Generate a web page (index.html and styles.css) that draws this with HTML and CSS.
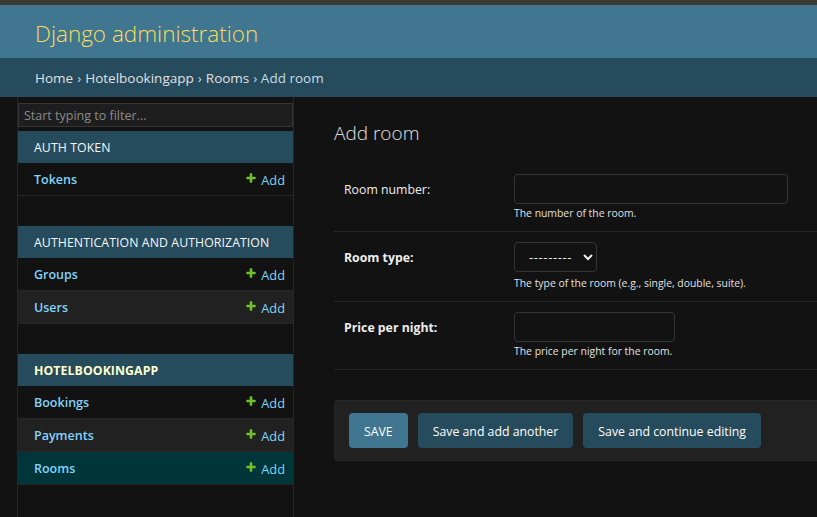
FILE: index.html
```html
<!DOCTYPE html>
<html lang="en">
<head>
<meta charset="utf-8">
<title>Add room | Django site admin</title>
<link rel="stylesheet" href="styles.css">
</head>
<body>
<div class="topbar"></div>
<header class="header">
  <div class="site-name">Django administration</div>
</header>
<nav class="breadcrumbs">
  <a href="#">Home</a> › <a href="#">Hotelbookingapp</a> › <a href="#">Rooms</a> › Add room
</nav>
<div class="main">
  <div class="toggle-nav"></div>
  <aside class="sidebar">
    <input class="nav-filter" type="search" placeholder="Start typing to filter...">
    <div class="module">
      <div class="caption">Auth Token</div>
      <div class="model-row">
        <a class="model" href="#">Tokens</a>
        <a class="addlink" href="#"><svg class="plus" viewBox="0 0 1792 1792"><path d="M1600 796v192q0 40-28 68t-68 28h-416v416q0 40-28 68t-68 28h-192q-40 0-68-28t-28-68v-416h-416q-40 0-68-28t-28-68v-192q0-40 28-68t68-28h416v-416q0-40 28-68t68-28h192q40 0 68 28t28 68v416h416q40 0 68 28t28 68z"/></svg>Add</a>
      </div>
    </div>
    <div class="module">
      <div class="caption">Authentication and Authorization</div>
      <div class="model-row">
        <a class="model" href="#">Groups</a>
        <a class="addlink" href="#"><svg class="plus" viewBox="0 0 1792 1792"><path d="M1600 796v192q0 40-28 68t-68 28h-416v416q0 40-28 68t-68 28h-192q-40 0-68-28t-28-68v-416h-416q-40 0-68-28t-28-68v-192q0-40 28-68t68-28h416v-416q0-40 28-68t68-28h192q40 0 68 28t28 68v416h416q40 0 68 28t28 68z"/></svg>Add</a>
      </div>
      <div class="model-row alt">
        <a class="model" href="#">Users</a>
        <a class="addlink" href="#"><svg class="plus" viewBox="0 0 1792 1792"><path d="M1600 796v192q0 40-28 68t-68 28h-416v416q0 40-28 68t-68 28h-192q-40 0-68-28t-28-68v-416h-416q-40 0-68-28t-28-68v-192q0-40 28-68t68-28h416v-416q0-40 28-68t68-28h192q40 0 68 28t28 68v416h416q40 0 68 28t28 68z"/></svg>Add</a>
      </div>
    </div>
    <div class="module current-app">
      <div class="caption">Hotelbookingapp</div>
      <div class="model-row">
        <a class="model" href="#">Bookings</a>
        <a class="addlink" href="#"><svg class="plus" viewBox="0 0 1792 1792"><path d="M1600 796v192q0 40-28 68t-68 28h-416v416q0 40-28 68t-68 28h-192q-40 0-68-28t-28-68v-416h-416q-40 0-68-28t-28-68v-192q0-40 28-68t68-28h416v-416q0-40 28-68t68-28h192q40 0 68 28t28 68v416h416q40 0 68 28t28 68z"/></svg>Add</a>
      </div>
      <div class="model-row alt">
        <a class="model" href="#">Payments</a>
        <a class="addlink" href="#"><svg class="plus" viewBox="0 0 1792 1792"><path d="M1600 796v192q0 40-28 68t-68 28h-416v416q0 40-28 68t-68 28h-192q-40 0-68-28t-28-68v-416h-416q-40 0-68-28t-28-68v-192q0-40 28-68t68-28h416v-416q0-40 28-68t68-28h192q40 0 68 28t28 68v416h416q40 0 68 28t28 68z"/></svg>Add</a>
      </div>
      <div class="model-row selected">
        <a class="model" href="#">Rooms</a>
        <a class="addlink" href="#"><svg class="plus" viewBox="0 0 1792 1792"><path d="M1600 796v192q0 40-28 68t-68 28h-416v416q0 40-28 68t-68 28h-192q-40 0-68-28t-28-68v-416h-416q-40 0-68-28t-28-68v-192q0-40 28-68t68-28h416v-416q0-40 28-68t68-28h192q40 0 68 28t28 68v416h416q40 0 68 28t28 68z"/></svg>Add</a>
      </div>
    </div>
  </aside>
  <main class="content">
    <h1 class="page-title">Add room</h1>
    <form class="room-form">
      <div class="fieldset">
        <div class="form-row">
          <label class="field-label" for="id_room_number">Room number:</label>
          <div class="field">
            <input class="text-input input-wide" id="id_room_number" type="text">
            <div class="help">The number of the room.</div>
          </div>
        </div>
        <div class="form-row">
          <label class="field-label required" for="id_room_type">Room type:</label>
          <div class="field">
            <select class="select-input" id="id_room_type">
              <option>---------</option>
            </select>
            <div class="help help-select">The type of the room (e.g., single, double, suite).</div>
          </div>
        </div>
        <div class="form-row">
          <label class="field-label required" for="id_price">Price per night:</label>
          <div class="field">
            <input class="text-input input-price" id="id_price" type="text">
            <div class="help">The price per night for the room.</div>
          </div>
        </div>
      </div>
      <div class="submit-row">
        <button class="btn btn-default" type="button">SAVE</button>
        <button class="btn" type="button">Save and add another</button>
        <button class="btn" type="button">Save and continue editing</button>
      </div>
    </form>
  </main>
</div>
</body>
</html>
```

FILE: styles.css
```css
html, body {
  margin: 0;
  padding: 0;
  overflow: hidden;
  height: 100%;
}

body {
  background: #121212;
  color: #eeeeee;
  font-family: "Open Sans", "Liberation Sans", sans-serif;
  font-size: 13.5px;
}

a {
  text-decoration: none;
}

.topbar {
  height: 5px;
  background: #3a3c36;
}

.header {
  height: 53px;
  background: #417690;
  display: flex;
  align-items: center;
  padding: 0 35px;
}

.site-name {
  color: #f5dd5d;
  font-size: 22.5px;
  font-weight: 300;
  line-height: 1.2;
  padding-top: 3px;
}

.breadcrumbs {
  height: 39px;
  box-sizing: border-box;
  background: #264b5d;
  color: #c4dce8;
  padding: 0 35px;
  display: flex;
  align-items: center;
  gap: 4px;
  font-size: 13.5px;
}

.breadcrumbs a {
  color: #e0e0e0;
}

.main {
  display: flex;
  min-height: 420px;
}

.toggle-nav {
  flex: 0 0 17px;
  border-right: 1px solid #272727;
  background: #121212;
}

.sidebar {
  flex: 0 0 275px;
  width: 275px;
  min-width: 0;
  overflow: hidden;
  border-right: 1px solid #272727;
  display: flex;
  flex-direction: column;
}

.nav-filter {
  display: block;
  box-sizing: border-box;
  width: 100%;
  height: 24px;
  margin: 6px 0 4px;
  padding: 2px 5px;
  border: 1px solid #353535;
  background: #1e1e1e;
  color: #eeeeee;
  font-family: inherit;
  font-size: 12.5px;
  outline: none;
}

.nav-filter::placeholder {
  color: #8a8a8a;
}

.module {
  margin-bottom: 30px;
}

.caption {
  background: #264b5d;
  color: #f7f7f7;
  font-size: 12.3px;
  line-height: 16px;
  letter-spacing: 0.08px;
  text-transform: uppercase;
  padding: 9px 16px 7px;
  white-space: nowrap;
}

.current-app .caption {
  color: #ffffcc;
  font-weight: 700;
}

.model-row {
  display: flex;
  justify-content: space-between;
  align-items: flex-start;
  padding: 9px 8px 7px 16px;
  font-size: 12.5px;
  line-height: 16px;
  border-bottom: 1px solid #272727;
}

.model-row.alt {
  background: #212121;
}

.model-row.selected {
  background: #00363a;
}

.model {
  color: #81d4fa;
  font-weight: 600;
}

.addlink {
  color: #81d4fa;
  display: flex;
  align-items: flex-start;
  font-size: 12.8px;
}

.plus {
  width: 12px;
  height: 12px;
  fill: #70bf2b;
  margin: 0 4px 0 0;
}

.content {
  flex: 1 1 auto;
  min-width: 0;
  padding: 20px 0 20px 40px;
}

.page-title {
  margin: 0;
  padding: 4px 0 19px;
  font-size: 19px;
  font-weight: 300;
  line-height: 24px;
  color: #e0e0e0;
}

.form-row {
  display: flex;
  padding: 10px;
  border-bottom: 1px solid #272727;
  font-size: 12.3px;
}

.field-label {
  flex: 0 0 160px;
  padding: 6px 10px 0 0;
  line-height: 20px;
  color: #eeeeee;
}

.field-label.required {
  font-weight: 700;
}

.field {
  display: flex;
  flex-direction: column;
  align-items: flex-start;
}

.text-input,
.select-input {
  box-sizing: border-box;
  height: 30px;
  border: 1px solid #353535;
  border-radius: 4px;
  background: #121212;
  color: #eeeeee;
  font-family: inherit;
  font-size: 13px;
  padding: 5px 6px;
  outline: none;
}

.input-wide {
  width: 274px;
}

.input-price {
  width: 161px;
}

.select-input {
  width: 83px;
  color-scheme: dark;
  padding: 0 6px 0 10px;
  letter-spacing: 0.6px;
}

.help {
  margin-top: 2px;
  font-size: 10.4px;
  line-height: 15px;
  color: #e0e0e0;
}

.help-select {
  margin-top: 4px;
}

.submit-row {
  display: flex;
  gap: 10px;
  margin-top: 30px;
  padding: 12px 14px;
  background: #212121;
  border: 1px solid #272727;
  border-right: 0;
  border-radius: 4px 0 0 4px;
}

.btn {
  height: 35px;
  padding: 1px 15px 0;
  border: 0;
  border-radius: 4px;
  background: #264b5d;
  color: #ffffff;
  font-family: inherit;
  font-size: 12.3px;
}

.btn-default {
  background: #417690;
}
```
